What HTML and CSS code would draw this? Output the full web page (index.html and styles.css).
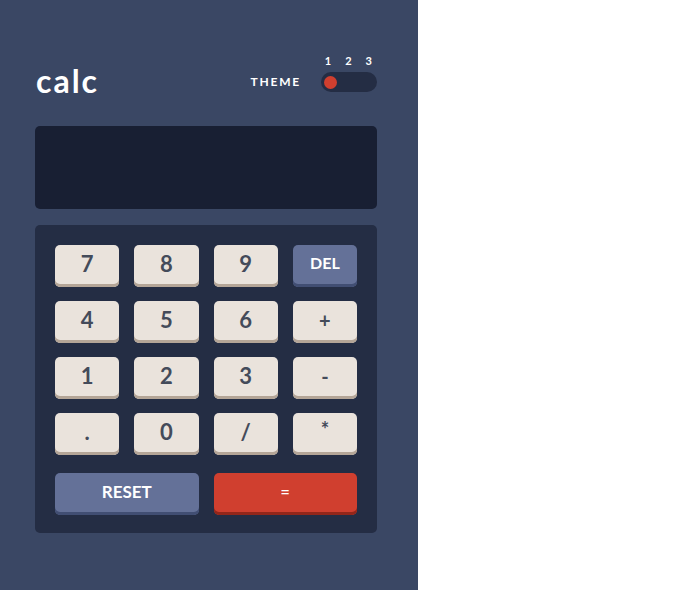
FILE: index.html
```html
<!DOCTYPE html>
<html lang="en">
<head>
<meta charset="utf-8">
<title>calc</title>
<link rel="stylesheet" href="styles.css">
</head>
<body>
<main class="calc">
  <header class="header">
    <h1 class="logo">calc</h1>
    <div class="theme">
      <span class="theme-label">THEME</span>
      <div class="theme-switch">
        <div class="theme-nums"><span>1</span><span>2</span><span>3</span></div>
        <div class="toggle"><span class="dot"></span></div>
      </div>
    </div>
  </header>
  <section class="display"></section>
  <section class="keypad">
    <button class="key">7</button>
    <button class="key">8</button>
    <button class="key">9</button>
    <button class="key key-alt">DEL</button>
    <button class="key">4</button>
    <button class="key">5</button>
    <button class="key">6</button>
    <button class="key key-op">+</button>
    <button class="key">1</button>
    <button class="key">2</button>
    <button class="key">3</button>
    <button class="key key-op">-</button>
    <button class="key">.</button>
    <button class="key">0</button>
    <button class="key">/</button>
    <button class="key key-op key-star">*</button>
    <button class="key key-alt key-wide key-reset">RESET</button>
    <button class="key key-eq key-wide">=</button>
  </section>
</main>
</body>
</html>
```
FILE: styles.css
```css
* { box-sizing: border-box; }
html, body { margin: 0; padding: 0; background: #ffffff; }
body { font-family: "Lato", "Liberation Sans", sans-serif; }

.calc {
  width: 418px;
  min-height: 590px;
  background: #3a4764;
  padding: 55px 41px 0 35px;
}

.header {
  display: flex;
  justify-content: space-between;
  align-items: flex-end;
  height: 37px;
}

.logo {
  margin: 0 0 -5px 1px;
  font-size: 32px;
  line-height: 32px;
  font-weight: 700;
  color: #ffffff;
  letter-spacing: 2px;
}

.theme {
  display: flex;
  align-items: flex-end;
}

.theme-label {
  font-size: 12px;
  line-height: 20px;
  font-weight: 700;
  color: #ffffff;
  letter-spacing: 1.8px;
  margin-right: 20px;
}

.theme-switch {
  display: flex;
  flex-direction: column;
  width: 56px;
}

.theme-nums {
  display: flex;
  justify-content: flex-end;
  gap: 14px;
  padding-right: 5px;
  font-size: 11px;
  line-height: 12px;
  font-weight: 700;
  color: #ffffff;
  margin-bottom: 5px;
}

.toggle {
  height: 20px;
  border-radius: 10px;
  background: #242d44;
  display: flex;
  align-items: center;
  padding: 0 3px;
}

.dot {
  width: 13px;
  height: 13px;
  border-radius: 50%;
  background: #d03f2f;
}

.display {
  margin-top: 34px;
  height: 83px;
  border-radius: 5px;
  background: #181f33;
}

.keypad {
  margin-top: 16px;
  background: #242d44;
  border-radius: 5px;
  padding: 20px 20px 18px;
  display: grid;
  grid-template-columns: repeat(4, 1fr);
  column-gap: 15px;
  row-gap: 14px;
}

.key {
  height: 42px;
  border: none;
  border-radius: 5px;
  background: #eae3dc;
  box-shadow: inset 0 -3px 0 #b4a597;
  color: #444b5a;
  font-family: inherit;
  font-weight: 700;
  font-size: 22px;
  line-height: 1;
  padding: 0 0 5px;
  display: flex;
  align-items: center;
  justify-content: center;
}

.key-op { font-size: 20px; }
.key-star { padding-bottom: 10px; }

.key-alt {
  background: #647198;
  box-shadow: inset 0 -3px 0 #414e73;
  color: #ffffff;
  font-size: 16px;
  padding-bottom: 6px;
}

.key-reset { font-size: 17px; }

.key-eq {
  background: #d03f2f;
  box-shadow: inset 0 -3px 0 #93261a;
  color: #ffffff;
  font-size: 16px;
  padding-bottom: 6px;
}

.key-wide {
  grid-column: span 2;
  margin-top: 4px;
}
```
